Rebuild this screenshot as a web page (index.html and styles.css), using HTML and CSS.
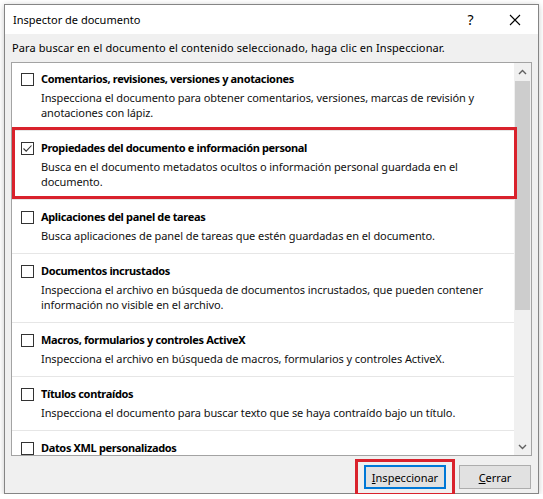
FILE: index.html
```html
<!DOCTYPE html>
<html lang="es">
<head>
<meta charset="utf-8">
<title>Inspector de documento</title>
<link rel="stylesheet" href="styles.css">
</head>
<body>
<div class="window">
  <div class="titlebar">
    <span class="title">Inspector de documento</span>
    <span class="tb-btn help">?</span>
    <span class="tb-btn close">
      <svg width="12" height="12" viewBox="0 0 12 12"><path d="M1 1 L11 11 M11 1 L1 11" stroke="#000" stroke-width="1.1" fill="none"/></svg>
    </span>
  </div>
  <div class="content">
    <p class="intro">Para buscar en el documento el contenido seleccionado, haga clic en Inspeccionar.</p>
    <div class="list">
      <div class="items">
        <div class="item first">
          <span class="check"></span>
          <div class="text">
            <div class="t">Comentarios, revisiones, versiones y anotaciones</div>
            <div class="d">Inspecciona el documento para obtener comentarios, versiones, marcas de revisión y<br>anotaciones con lápiz.</div>
          </div>
        </div>
        <div class="item marked">
          <span class="check on"><svg width="11" height="11" viewBox="0 0 11 11"><path d="M1.5 5.5 L4.2 8.2 L9.5 2.5" stroke="#333" stroke-width="1.1" fill="none"/></svg></span>
          <div class="text">
            <div class="t">Propiedades del documento e información personal</div>
            <div class="d">Busca en el documento metadatos ocultos o información personal guardada en el<br>documento.</div>
          </div>
        </div>
        <div class="item">
          <span class="check"></span>
          <div class="text">
            <div class="t">Aplicaciones del panel de tareas</div>
            <div class="d">Busca aplicaciones de panel de tareas que estén guardadas en el documento.</div>
          </div>
        </div>
        <div class="item">
          <span class="check"></span>
          <div class="text">
            <div class="t">Documentos incrustados</div>
            <div class="d">Inspecciona el archivo en búsqueda de documentos incrustados, que pueden contener<br>información no visible en el archivo.</div>
          </div>
        </div>
        <div class="item">
          <span class="check"></span>
          <div class="text">
            <div class="t">Macros, formularios y controles ActiveX</div>
            <div class="d">Inspecciona el archivo en búsqueda de macros, formularios y controles ActiveX.</div>
          </div>
        </div>
        <div class="item">
          <span class="check"></span>
          <div class="text">
            <div class="t">Títulos contraídos</div>
            <div class="d">Inspecciona el documento para buscar texto que se haya contraído bajo un título.</div>
          </div>
        </div>
        <div class="item last">
          <span class="check"></span>
          <div class="text">
            <div class="t">Datos XML personalizados</div>
          </div>
        </div>
      </div>
      <div class="scrollbar">
        <div class="sb-btn"><svg width="9" height="6" viewBox="0 0 9 6"><path d="M1 5 L4.5 1.5 L8 5" stroke="#606060" stroke-width="1.4" fill="none"/></svg></div>
        <div class="track"><div class="thumb"></div></div>
        <div class="sb-btn"><svg width="9" height="6" viewBox="0 0 9 6"><path d="M1 1 L4.5 4.5 L8 1" stroke="#606060" stroke-width="1.4" fill="none"/></svg></div>
      </div>
    </div>
    <div class="buttons">
      <span class="btn-wrap marked-btn"><button class="btn primary"><span class="key">I</span>nspeccionar</button></span>
      <button class="btn cancel"><span class="key">C</span>errar</button>
    </div>
  </div>
</div>
</body>
</html>
```

FILE: styles.css
```css
* { box-sizing: border-box; }

body {
  margin: 0;
  background: #ffffff;
  font-family: "Noto Sans", "Open Sans", sans-serif;
  font-size: 11px;
  color: #000;
}

.window {
  margin: 4px 0 0 4px;
  width: 535px;
  height: 490px;
  border: 1px solid #858585;
  background: #f0f0f0;
  display: flex;
  flex-direction: column;
  box-shadow: 0 1px 6px rgba(0, 0, 0, 0.22);
}

.titlebar {
  height: 29px;
  background: #fff;
  display: flex;
  align-items: center;
  padding-left: 8px;
  flex: none;
}

.title {
  flex: 1;
  font-size: 11px;
  color: #000;
}

.tb-btn {
  width: 46px;
  height: 29px;
  display: flex;
  align-items: center;
  justify-content: center;
}

.help {
  font-size: 14px;
  padding-left: 3px;
}

.content {
  flex: 1;
  padding: 6px 6px 0 6px;
  display: flex;
  flex-direction: column;
}

.intro {
  margin: 0 0 6px 1px;
  line-height: 16px;
  white-space: nowrap;
  letter-spacing: 0.1px;
}

.list {
  height: 394px;
  flex: none;
  border: 1px solid #a3a3a3;
  background: #fff;
  display: flex;
  overflow: hidden;
}

.items {
  flex: 1;
  min-width: 0;
}

.item {
  display: flex;
  gap: 7px;
  padding: 9px 0 10px 9px;
  border-bottom: 1px solid #e6e6e6;
  position: relative;
}

.item.first {
  padding-top: 8px;
}

.item.last {
  border-bottom: none;
}

.check {
  flex: none;
  width: 13px;
  height: 13px;
  margin-top: 2px;
  border: 1px solid #333;
  background: #fff;
  display: flex;
  align-items: center;
  justify-content: center;
}

.text {
  white-space: nowrap;
}

.t {
  font-weight: bold;
  line-height: 16px;
  letter-spacing: -0.35px;
}

.d {
  margin-top: 3px;
  line-height: 15px;
  color: #111;
  letter-spacing: -0.08px;
}

.marked::after {
  content: "";
  position: absolute;
  left: 0;
  right: -3px;
  top: -4px;
  bottom: 0;
  border: 3px solid #d9222c;
}

.scrollbar {
  width: 17px;
  flex: none;
  background: #f0f0f0;
  display: flex;
  flex-direction: column;
}

.sb-btn {
  height: 17px;
  flex: none;
  display: flex;
  align-items: center;
  justify-content: center;
}

.track {
  flex: 1;
  padding: 1px 1px 0 1px;
}

.thumb {
  height: 229px;
  background: #cdcdcd;
}

.buttons {
  display: flex;
  justify-content: flex-end;
  gap: 13px;
  margin-top: 9px;
  padding-right: 1px;
}

.btn-wrap {
  position: relative;
  display: flex;
}

.marked-btn::after {
  content: "";
  position: absolute;
  left: -9px;
  right: -9px;
  top: -6px;
  bottom: -7px;
  border: 3px solid #d9222c;
}

.btn {
  height: 24px;
  margin: 0;
  padding: 0;
  font-family: inherit;
  font-size: 11px;
  color: #000;
  background: #e1e1e1;
  border: 1px solid #adadad;
}

.key {
  text-decoration: underline;
}

.btn.primary {
  width: 82px;
  border: 2px solid #0078d7;
}

.btn.cancel {
  width: 72px;
}
```
